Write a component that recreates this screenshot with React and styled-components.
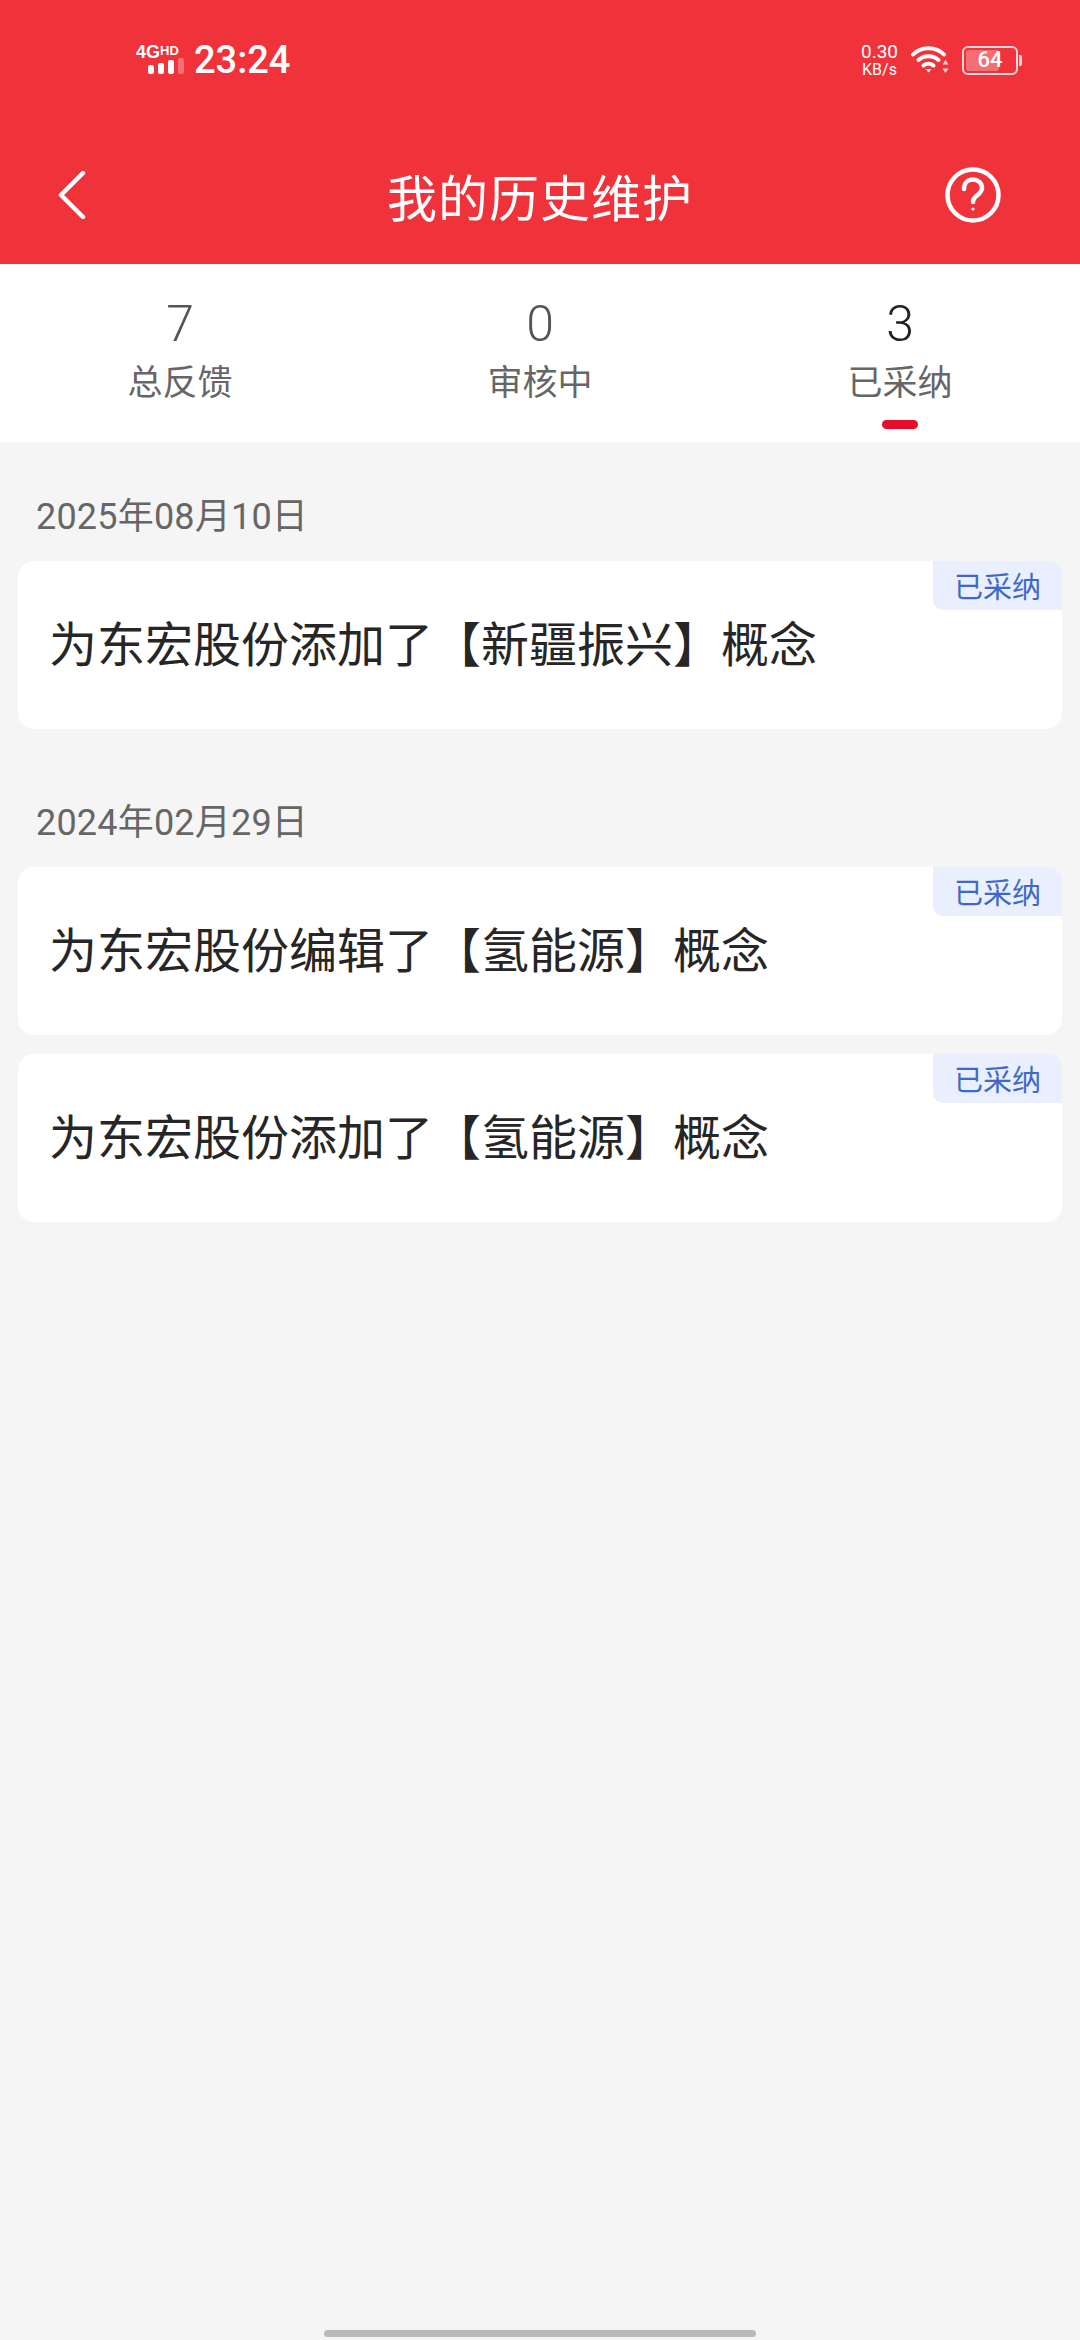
import React from "react";
import styled, { createGlobalStyle } from "styled-components";

const Global = createGlobalStyle`
  html, body { margin: 0; padding: 0; background: #f5f5f5; }
  * { box-sizing: border-box; }
  body { font-family: "Noto Sans CJK SC", "Noto Sans", sans-serif; }
`;

const Page = styled.div`
  position: relative;
  width: 1080px;
  height: 2340px;
  background: #f5f5f5;
  display: flex;
  flex-direction: column;
  overflow: hidden;
`;

const Header = styled.header`
  height: 264px;
  flex: none;
  background: #f0323a;
  color: #fff;
  display: flex;
  flex-direction: column;
`;

const StatusBar = styled.div`
  height: 120px;
  flex: none;
  padding: 0 58px 0 136px;
  display: flex;
  align-items: center;
  justify-content: space-between;
`;

const StatusGroup = styled.div`
  display: flex;
  align-items: center;
`;

const NetworkBadge = styled.div`
  width: 48px;
  height: 32px;
  position: relative;
  margin-right: 10px;
`;

const NetworkLabel = styled.span`
  position: absolute;
  left: 0;
  top: -2px;
  font: 700 18px/18px "Liberation Sans", sans-serif;
  white-space: nowrap;
`;

const NetworkSup = styled.span`
  font-size: 13px;
  vertical-align: 3px;
`;

const Clock = styled.span`
  font: 500 38px/44px Roboto, sans-serif;
`;

const Speed = styled.div`
  width: 37px;
  display: flex;
  flex-direction: column;
  align-items: center;
  font: 400 16px/17px Roboto, sans-serif;
  margin-right: 13px;
`;

const SpeedValue = styled.span`
  font-size: 19px;
  line-height: 18px;
`;

const Battery = styled.div`
  position: relative;
  margin-left: 13px;
  width: 56px;
  height: 29px;
  border: 2px solid #fbd6d8;
  border-radius: 6px;
  display: flex;
  align-items: center;
  justify-content: center;
`;

const BatteryFill = styled.div`
  position: absolute;
  left: 2px;
  top: 2px;
  bottom: 2px;
  border-radius: 3px;
  background: rgba(255, 255, 255, 0.3);
`;

const BatteryCap = styled.div`
  width: 3px;
  height: 11px;
  margin-left: 1px;
  border-radius: 0 2px 2px 0;
  background: #fbd6d8;
`;

const BatteryText = styled.span`
  position: relative;
  font: 500 22px/22px Roboto, sans-serif;
`;

const NavBar = styled.nav`
  height: 144px;
  flex: none;
  padding: 5px 58px 0;
  display: grid;
  grid-template-columns: 1fr auto 1fr;
  align-items: center;
`;

const HelpSlot = styled.div`
  justify-self: end;
  margin-right: 21px;
  display: flex;
  padding-top: 1px;
`;

const Title = styled.h1`
  margin: 0;
  font-size: 50px;
  line-height: 60px;
  font-weight: 400;
  letter-spacing: 1px;
`;

const Tabs = styled.div`
  height: 178px;
  flex: none;
  background: #fff;
  display: grid;
  grid-template-columns: repeat(3, 1fr);
`;

const Tab = styled.div`
  position: relative;
  display: flex;
  flex-direction: column;
  align-items: center;
  padding-top: 32px;
  color: ${(p) => (p.$active ? "#222" : "#555")};
`;

const TabCount = styled.span`
  font: 300 50px/56px Roboto, sans-serif;
`;

const TabLabel = styled.span`
  font-size: 35px;
  line-height: 46px;
  margin-top: 5px;
  color: #666;
`;

const Underline = styled.span`
  position: absolute;
  left: 50%;
  bottom: 13px;
  width: 36px;
  height: 9px;
  margin-left: -18px;
  border-radius: 5px;
  background: #e60d2a;
`;

const Content = styled.main`
  padding: 0 18px;
  display: flex;
  flex-direction: column;
`;

const Section = styled.section`
  display: flex;
  flex-direction: column;
  gap: 19px;
  margin-bottom: 19px;
`;

const DateLabel = styled.div`
  height: 119px;
  margin-bottom: -19px;
  padding: 51px 18px 0;
  font-family: Roboto, "Noto Sans CJK SC", sans-serif;
  font-size: 36px;
  line-height: 48px;
  letter-spacing: 0.2px;
  color: #666;
`;

const Card = styled.article`
  position: relative;
  height: 168px;
  background: #fff;
  border-radius: 16px;
  padding: 0 31px 8px;
  display: flex;
  align-items: center;
  font-size: 48px;
  line-height: 60px;
  color: #262626;
`;

const Badge = styled.span`
  position: absolute;
  top: 0;
  right: 0;
  width: 129px;
  height: 49px;
  padding-bottom: 2px;
  background: #e9effc;
  border-radius: 0 14px 0 10px;
  display: flex;
  align-items: center;
  justify-content: center;
  font-size: 29px;
  line-height: 36px;
  color: #3f69c9;
`;

const HomeBar = styled.div`
  position: absolute;
  left: 324px;
  top: 2330px;
  width: 432px;
  height: 7px;
  border-radius: 4px;
  background: #b9b9b9;
`;

const Back = () => (
  <svg width="30" height="48" viewBox="0 0 30 48" fill="none" stroke="#fff" strokeWidth="4.500" strokeLinecap="round" strokeLinejoin="round">
    <path d="M25 2 3 24l22 22" />
  </svg>
);

const Help = () => (
  <svg width="56" height="56" viewBox="0 0 56 56" fill="none" stroke="#fff" strokeWidth="4.500" strokeLinecap="round">
    <circle cx="28" cy="28" r="25.500" />
    <path d="M19 22c0-6 4-9.500 9-9.500s9 3.500 9 8.500c0 7-9 7-9 14" />
    <circle cx="28" cy="42" r="1.600" fill="#fff" stroke="none" />
  </svg>
);

const Signal = () => (
  <svg width="36" height="16" viewBox="0 0 36 16" style={{ position: "absolute", left: 12, top: 14 }}>
    <rect x="0" y="7" width="6" height="9" rx="2" fill="#fff" />
    <rect x="10" y="5" width="6" height="11" rx="2" fill="#fff" />
    <rect x="20" y="2" width="6" height="14" rx="2" fill="#fff" />
    <rect x="30" y="0" width="6" height="16" rx="2" fill="#fff" opacity="0.3" />
  </svg>
);

const Wifi = () => (
  <svg width="38" height="30" viewBox="0 0 38 30" fill="none" stroke="#fff" strokeWidth="4" strokeLinecap="round">
    <path d="M2 9.500C10 1 25 1 33 9.500" />
    <path d="M7.500 15C13 10 22 10 27.500 15" />
    <path d="M12.500 20.500c3-2.500 7-2.500 10 0" />
    <path d="M17.500 27.500l-3-3.500h6z" fill="#fff" stroke="none" />
    <path d="M34.500 15l-3 4.500h6zM34.500 28l-3-4.500h6z" fill="#fff" stroke="none" opacity="0.8" />
  </svg>
);

const groups = [
  { date: "2025年08月10日", items: ["为东宏股份添加了【新疆振兴】概念"] },
  { date: "2024年02月29日", items: ["为东宏股份编辑了【氢能源】概念", "为东宏股份添加了【氢能源】概念"] },
];

const tabs = [
  { count: 7, label: "总反馈" },
  { count: 0, label: "审核中" },
  { count: 3, label: "已采纳", active: true },
];

export default function App() {
  return (
    <Page>
      <Global />
      <Header>
        <StatusBar>
          <StatusGroup>
            <NetworkBadge>
              <NetworkLabel>
                4G<NetworkSup>HD</NetworkSup>
              </NetworkLabel>
              <Signal />
            </NetworkBadge>
            <Clock>23:24</Clock>
          </StatusGroup>
          <StatusGroup>
            <Speed>
              <SpeedValue>0.30</SpeedValue>
              <span>KB/s</span>
            </Speed>
            <Wifi />
            <Battery>
              <BatteryFill style={{ width: "64%" }} />
              <BatteryText>64</BatteryText>
            </Battery>
            <BatteryCap />
          </StatusGroup>
        </StatusBar>
        <NavBar>
          <Back />
          <Title>我的历史维护</Title>
          <HelpSlot>
            <Help />
          </HelpSlot>
        </NavBar>
      </Header>
      <Tabs>
        {tabs.map((t) => (
          <Tab key={t.label} $active={t.active}>
            <TabCount>{t.count}</TabCount>
            <TabLabel>{t.label}</TabLabel>
            {t.active && <Underline />}
          </Tab>
        ))}
      </Tabs>
      <Content>
        {groups.map((g) => (
          <Section key={g.date}>
            <DateLabel>{g.date}</DateLabel>
            {g.items.map((item) => (
              <Card key={item}>
                {item}
                <Badge>已采纳</Badge>
              </Card>
            ))}
          </Section>
        ))}
      </Content>
      <HomeBar />
    </Page>
  );
}
